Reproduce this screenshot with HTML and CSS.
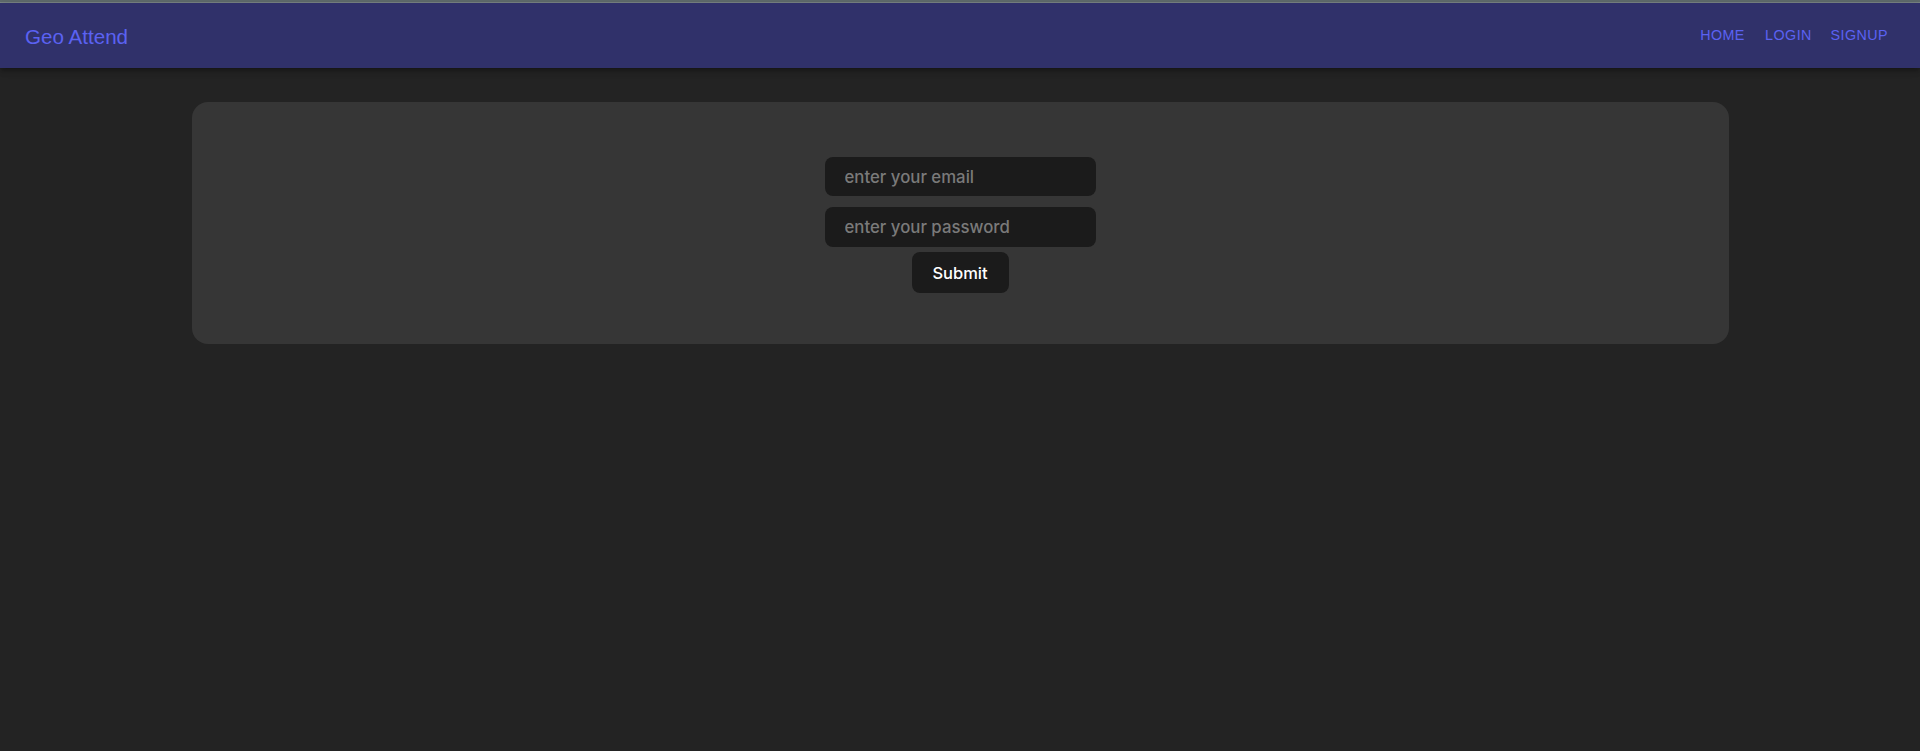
FILE: index.html
```html
<!DOCTYPE html>
<html lang="en">
<head>
<meta charset="utf-8">
<title>Geo Attend</title>
<link rel="stylesheet" href="styles.css">
</head>
<body>
<div class="topline"></div>
<header class="appbar">
  <div class="brand">Geo Attend</div>
  <nav class="nav">
    <a class="navbtn" href="#">HOME</a>
    <a class="navbtn" href="#">LOGIN</a>
    <a class="navbtn" href="#">SIGNUP</a>
  </nav>
</header>
<main class="main">
  <section class="card">
    <form class="form">
      <input class="field" type="email" placeholder="enter your email">
      <input class="field field-pass" type="password" placeholder="enter your password">
      <button class="submit" type="button">Submit</button>
    </form>
  </section>
</main>
</body>
</html>
```

FILE: styles.css
```css
* { box-sizing: border-box; }
html, body { margin: 0; padding: 0; }
body {
  background: #232323;
  height: 751px;
  overflow: hidden;
  font-family: Inter, "Noto Sans", sans-serif;
}
.topline {
  height: 3px;
  background: #5f6b6c;
  border-bottom: 1px solid #7a8585;
}
.appbar {
  height: 65px;
  background: #30316a;
  display: flex;
  align-items: center;
  justify-content: space-between;
  padding: 0 24px 0 25px;
  box-shadow: 0 2px 4px -1px rgba(0,0,0,0.2), 0 4px 5px 0 rgba(0,0,0,0.14), 0 1px 10px 0 rgba(0,0,0,0.12);
  position: relative;
}
.brand {
  font-family: "Liberation Sans", Arial, sans-serif;
  font-size: 20.6px;
  color: #5b62f2;
  margin-top: 3px;
}
.nav {
  display: flex;
  gap: 2px;
  margin-top: -2px;
}
.navbtn {
  min-width: 64px;
  padding: 6px 8px;
  text-align: center;
  font-family: "Liberation Sans", Arial, sans-serif;
  font-size: 14.3px;
  letter-spacing: 0.45px;
  line-height: 24px;
  color: #5b62f2;
  text-decoration: none;
}
.main {
  padding-top: 34px;
  display: flex;
  justify-content: center;
}
.card {
  width: 1537px;
  height: 242px;
  background: #363636;
  border-radius: 16px;
  padding-top: 55px;
  display: flex;
  justify-content: center;
}
.form {
  display: flex;
  flex-direction: column;
  align-items: center;
}
.field {
  width: 271px;
  height: 39px;
  border: none;
  border-radius: 8px;
  background: #1b1b1b;
  color: #e0e0e0;
  padding: 0 20px;
  font-family: Inter, "Noto Sans", sans-serif;
  font-size: 16.8px;
  font-weight: 500;
  outline: none;
}
.field::placeholder { color: #7a7a7a; }
.field-pass { margin-top: 11px; height: 40px; }
.submit {
  margin-top: 5px;
  width: 97px;
  height: 41px;
  border: 1px solid transparent;
  border-radius: 8px;
  background: #1b1b1b;
  color: #ffffff;
  font-family: Inter, "Noto Sans", sans-serif;
  font-size: 16.5px;
  font-weight: 500;
  padding: 0;
}
```
